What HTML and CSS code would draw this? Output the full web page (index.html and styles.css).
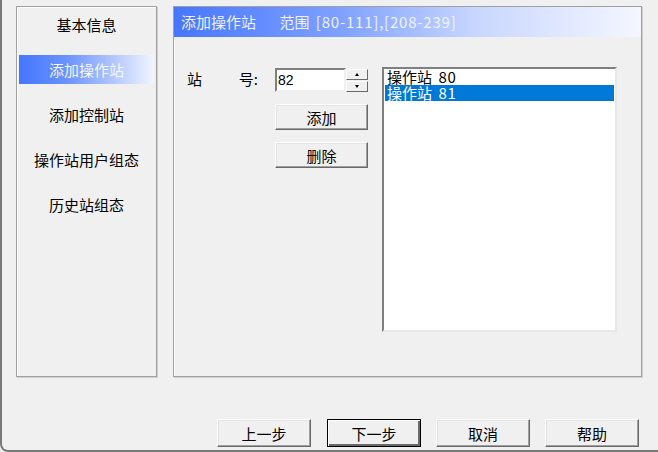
FILE: index.html
```html
<!DOCTYPE html>
<html lang="zh-CN">
<head>
  <meta charset="UTF-8">
  <title>添加操作站</title>
  <link rel="stylesheet" href="styles.css">
</head>
<body>
  <div class="window">
    <div class="panels">
      <div class="group nav">
        <div class="nav-item">基本信息</div>
        <div class="nav-item active">添加操作站</div>
        <div class="nav-item">添加控制站</div>
        <div class="nav-item">操作站用户组态</div>
        <div class="nav-item">历史站组态</div>
      </div>

      <div class="group page">
        <div class="page-header">
          <span class="page-title">添加操作站</span>
          <span class="page-range">范围 <span class="digits">[80-111],[208-239]</span></span>
        </div>

        <div class="page-body">
          <div class="field-label">
            <span>站</span>
            <span>号:</span>
          </div>

          <div class="controls">
            <div class="spin">
              <div class="spin-text">82</div>
              <div class="spin-arrows">
                <div class="spin-btn"><span class="tri up"></span></div>
                <div class="spin-btn"><span class="tri down"></span></div>
              </div>
            </div>
            <button class="btn small">添加</button>
            <button class="btn small">删除</button>
          </div>

          <div class="listbox">
            <div class="list-item">操作站 <span class="digits">80</span></div>
            <div class="list-item selected">操作站 <span class="digits">81</span></div>
          </div>
        </div>
      </div>
    </div>

    <div class="footer">
      <button class="btn">上一步</button>
      <button class="btn default">下一步</button>
      <button class="btn">取消</button>
      <button class="btn">帮助</button>
    </div>
  </div>
</body>
</html>
```

FILE: styles.css
```css
html, body {
  margin: 0;
  padding: 0;
  overflow: hidden;
}

body {
  background: #f0f0f0;
  font-family: "Noto Sans CJK SC", "Microsoft YaHei", sans-serif;
  font-size: 15px;
  color: #000;
}

.window {
  box-sizing: border-box;
  width: 665px;
  height: 452px;
  border-left: 2px solid #7a7a7a;
  border-right: 2px solid #7a7a7a;
  border-bottom: 2px solid #7a7a7a;
  border-bottom-left-radius: 8px;
  border-bottom-right-radius: 8px;
  padding: 6px 0 0 14px;
}

.panels {
  display: flex;
  gap: 16px;
  height: 371px;
}

.group {
  box-sizing: border-box;
  height: 371px;
  border: 1px solid #a0a0a0;
  box-shadow: inset 1px 1px 0 #ffffff, 1px 1px 0 #d0d0d0;
}

.nav {
  width: 141px;
  padding: 3px 2px 0;
  display: flex;
  flex-direction: column;
  gap: 16px;
}

.nav-item {
  height: 29px;
  line-height: 29px;
  text-align: center;
  white-space: nowrap;
}

.nav-item.active {
  background: linear-gradient(to right, #4476ff, #6a92ff 35%, #f2f5ff);
  color: #f4f7ff;
}

.page {
  width: 469px;
}

.page-header {
  height: 30px;
  line-height: 29px;
  background: linear-gradient(to right, #4676ff, #7da0ff 35%, #c9d7ff 65%, #f5f7ff);
  color: #eef2ff;
  padding-left: 7px;
  white-space: nowrap;
}

.page-range {
  margin-left: 20px;
}

.digits {
  letter-spacing: 0.8px;
  margin-left: 3px;
}

.page-body {
  display: flex;
  padding: 30px 0 0 13px;
}

.field-label {
  width: 88px;
  display: flex;
  justify-content: space-between;
  padding-right: 17px;
  box-sizing: border-box;
  height: 24px;
  line-height: 22px;
  margin-top: 1px;
}

.controls {
  width: 93px;
  display: flex;
  flex-direction: column;
  margin-top: 1px;
}

.spin {
  display: flex;
  height: 24px;
}

.spin-text {
  box-sizing: border-box;
  width: 71px;
  height: 24px;
  background: #fff;
  border: 2px solid;
  border-color: #808080 #f0f0f0 #f0f0f0 #808080;
  padding-left: 1px;
  line-height: 20px;
  font-family: "Liberation Sans", sans-serif;
  font-size: 14px;
}

.spin-arrows {
  width: 22px;
  display: flex;
  flex-direction: column;
  gap: 1px;
  padding-top: 1px;
}

.spin-btn {
  box-sizing: border-box;
  height: 11px;
  border: 1px solid;
  border-color: #fff #696969 #696969 #fff;
  background: #f0f0f0;
  display: flex;
  align-items: center;
  justify-content: center;
}

.tri {
  width: 0;
  height: 0;
  border-left: 2px solid transparent;
  border-right: 2px solid transparent;
}

.tri.up {
  border-bottom: 3px solid #000;
}

.tri.down {
  border-top: 3px solid #000;
}

.btn {
  box-sizing: border-box;
  width: 94px;
  height: 28px;
  padding: 0;
  background: #f0f0f0;
  border: 1px solid;
  border-color: #fff #696969 #696969 #fff;
  box-shadow: inset -1px -1px 0 #a0a0a0, inset 1px 1px 0 #e3e3e3;
  font-family: inherit;
  font-size: 15px;
  color: #000;
}

.btn.small {
  width: 93px;
  height: 26px;
  margin-top: 12px;
}

.btn.default {
  border: 1px solid #000;
  box-shadow: inset 1px 1px 0 #fff, inset -2px -2px 0 #696969;
}

.listbox {
  box-sizing: border-box;
  width: 235px;
  height: 265px;
  margin-left: 14px;
  background: #fff;
  border: 2px solid;
  border-color: #808080 #e8e8e8 #e8e8e8 #808080;
  padding: 0 1px;
}

.list-item {
  height: 16px;
  line-height: 16px;
  padding-left: 2px;
  white-space: nowrap;
}

.list-item.selected {
  background: #0078d7;
  color: #fff;
}

.footer {
  display: flex;
  gap: 15px;
  margin: 42px 0 0 201px;
}

.footer .btn:nth-child(2) {
  margin-left: 1px;
}
```
